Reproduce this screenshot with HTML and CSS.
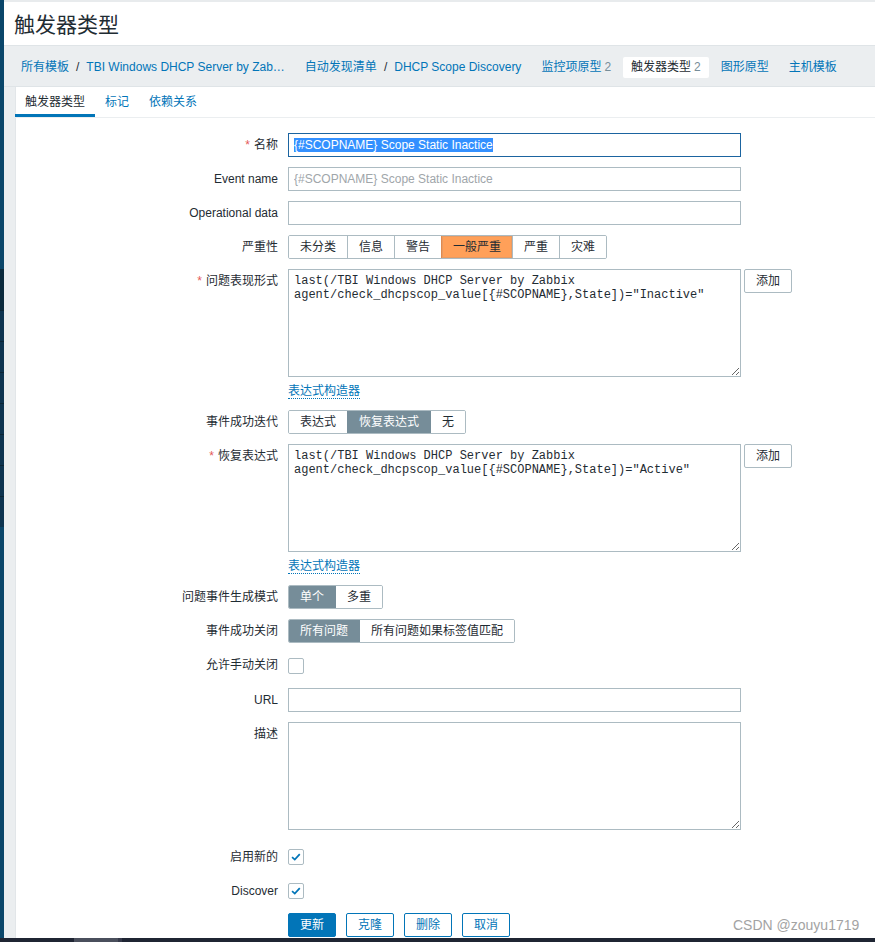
FILE: index.html
```html
<!DOCTYPE html>
<html lang="zh-CN">
<head>
<meta charset="utf-8">
<title>触发器类型</title>
<link rel="stylesheet" href="styles.css">
</head>
<body>
<div class="screen">
  <div class="app">
    <div class="rail">
      <div class="rail-top"></div>
      <div class="rail-dark"></div>
      <div class="rail-item"></div>
      <div class="rail-item"></div>
      <div class="rail-item"></div>
      <div class="rail-item"></div>
      <div class="rail-item"></div>
      <div class="rail-item"></div>
      <div class="rail-item"></div>
      <div class="rail-rest"></div>
    </div>
    <div class="main">
      <header class="page-header">
        <h1 class="page-title">触发器类型</h1>
      </header>
      <nav class="crumbs">
        <div class="crumb"><a class="link">所有模板</a><span class="sep">/</span><a class="link">TBI Windows DHCP Server by Zab…</a></div>
        <div class="crumb"><a class="link">自动发现清单</a><span class="sep">/</span><a class="link">DHCP Scope Discovery</a></div>
        <div class="crumb"><a class="link">监控项原型</a> <span class="count">2</span></div>
        <div class="crumb current"><span>触发器类型</span> <span class="count">2</span></div>
        <div class="crumb"><a class="link">图形原型</a></div>
        <div class="crumb"><a class="link">主机模板</a></div>
      </nav>
      <div class="wrap">
        <div class="panel">
          <div class="tabs">
            <span class="tab active">触发器类型</span>
            <a class="tab">标记</a>
            <a class="tab">依赖关系</a>
          </div>
          <form class="form">
            <div class="row">
              <label class="lbl"><span class="req">*</span>名称</label>
              <div class="fld"><div class="text-input focused"><span class="sel">{#SCOPNAME} Scope Static Inactice</span></div></div>
            </div>
            <div class="row">
              <label class="lbl">Event name</label>
              <div class="fld"><input class="text-input" type="text" placeholder="{#SCOPNAME} Scope Static Inactice"></div>
            </div>
            <div class="row">
              <label class="lbl">Operational data</label>
              <div class="fld"><input class="text-input" type="text"></div>
            </div>
            <div class="row">
              <label class="lbl">严重性</label>
              <div class="fld">
                <div class="seg">
                  <span class="opt">未分类</span>
                  <span class="opt">信息</span>
                  <span class="opt">警告</span>
                  <span class="opt sev-avg">一般严重</span>
                  <span class="opt">严重</span>
                  <span class="opt">灾难</span>
                </div>
              </div>
            </div>
            <div class="row">
              <label class="lbl"><span class="req">*</span>问题表现形式</label>
              <div class="fld">
                <div class="fld-inline">
                  <textarea class="area" spellcheck="false">last(/TBI Windows DHCP Server by Zabbix agent/check_dhcpscop_value[{#SCOPNAME},State])="Inactive"</textarea>
                  <button type="button" class="btn-alt">添加</button>
                </div>
                <div class="under"><a class="dotted">表达式构造器</a></div>
              </div>
            </div>
            <div class="row">
              <label class="lbl">事件成功迭代</label>
              <div class="fld">
                <div class="seg">
                  <span class="opt">表达式</span>
                  <span class="opt on">恢复表达式</span>
                  <span class="opt">无</span>
                </div>
              </div>
            </div>
            <div class="row">
              <label class="lbl"><span class="req">*</span>恢复表达式</label>
              <div class="fld">
                <div class="fld-inline">
                  <textarea class="area" spellcheck="false">last(/TBI Windows DHCP Server by Zabbix agent/check_dhcpscop_value[{#SCOPNAME},State])="Active"</textarea>
                  <button type="button" class="btn-alt">添加</button>
                </div>
                <div class="under"><a class="dotted">表达式构造器</a></div>
              </div>
            </div>
            <div class="row">
              <label class="lbl">问题事件生成模式</label>
              <div class="fld">
                <div class="seg">
                  <span class="opt on">单个</span>
                  <span class="opt">多重</span>
                </div>
              </div>
            </div>
            <div class="row">
              <label class="lbl">事件成功关闭</label>
              <div class="fld">
                <div class="seg">
                  <span class="opt on">所有问题</span>
                  <span class="opt">所有问题如果标签值匹配</span>
                </div>
              </div>
            </div>
            <div class="row row-tall">
              <label class="lbl">允许手动关闭</label>
              <div class="fld fld-check"><span class="check"></span></div>
            </div>
            <div class="row">
              <label class="lbl">URL</label>
              <div class="fld"><input class="text-input" type="text"></div>
            </div>
            <div class="row">
              <label class="lbl">描述</label>
              <div class="fld"><textarea class="area" spellcheck="false"></textarea></div>
            </div>
            <div class="row row-spaced">
              <label class="lbl">启用新的</label>
              <div class="fld fld-check"><span class="check"><svg viewBox="0 0 16 16" width="14" height="14"><path d="M3.5 8.2 L6.6 11 L12.3 4.8" fill="none" stroke="#0275b8" stroke-width="2"/></svg></span></div>
            </div>
            <div class="row">
              <label class="lbl">Discover</label>
              <div class="fld fld-check"><span class="check"><svg viewBox="0 0 16 16" width="14" height="14"><path d="M3.5 8.2 L6.6 11 L12.3 4.8" fill="none" stroke="#0275b8" stroke-width="2"/></svg></span></div>
            </div>
            <div class="row">
              <div class="lbl"></div>
              <div class="fld actions">
                <button type="button" class="btn primary">更新</button>
                <button type="button" class="btn">克隆</button>
                <button type="button" class="btn">删除</button>
                <button type="button" class="btn">取消</button>
              </div>
            </div>
          </form>
        </div>
      </div>
    </div>
  </div>
  <div class="hbar">
    <div class="hbar-gap"></div>
    <div class="hbar-thumb"></div>
    <div class="hbar-tail"></div>
  </div>
  <div class="watermark">CSDN @zouyu1719</div>
</div>
</body>
</html>
```

FILE: styles.css
```css
* { box-sizing: border-box; }

html, body {
  margin: 0;
  padding: 0;
  height: 942px;
  overflow: hidden;
  background: #ffffff;
}

body {
  font-family: "Liberation Sans", "Noto Sans CJK SC", sans-serif;
  font-size: 12px;
  color: #1f2c33;
}

.screen {
  position: relative;
  height: 942px;
  display: flex;
  flex-direction: column;
}

.app {
  flex: 1;
  display: flex;
  overflow: hidden;
  min-height: 0;
}

/* left rail */
.rail {
  width: 4px;
  flex: none;
  display: flex;
  flex-direction: column;
  background: #0a466a;
}
.rail-top { height: 269px; background: #0a466a; }
.rail-dark { height: 41px; background: #0a2a3d; }
.rail-item { height: 31px; background: #0d3450; border-top: 1px solid #0a2536; }
.rail-rest { flex: 1; background: #0a466a; }

.main {
  flex: 1;
  display: flex;
  flex-direction: column;
  min-width: 0;
}

/* header */
.page-header {
  height: 46px;
  border-top: 2px solid #e8ebed;
  border-bottom: 1px solid #dfe4e7;
  background: #ffffff;
  padding-left: 10px;
  padding-top: 2px;
  display: flex;
  align-items: center;
}
.page-title {
  margin: 0;
  font-size: 21px;
  font-weight: normal;
  line-height: 28px;
  color: #1f2c33;
}

/* breadcrumbs */
.crumbs {
  height: 41px;
  background: #ebeef0;
  border-bottom: 1px solid #dfe4e7;
  display: flex;
  align-items: center;
  gap: 4px;
  padding-left: 9px;
  padding-top: 3px;
  white-space: nowrap;
}
.crumb {
  display: flex;
  align-items: center;
  padding: 0 8px;
  height: 21px;
  line-height: 21px;
  border-radius: 2px;
}
.crumb.current {
  background: #ffffff;
  color: #1f2c33;
}
.crumb .count {
  color: #768d99;
  margin-left: 3px;
}
.link {
  color: #0275b8;
  text-decoration: none;
}
.sep {
  margin: 0 7px;
  color: #1f2c33;
}

/* content */
.wrap {
  flex: 1;
  background: #ebeef0;
  padding-left: 11px;
  display: flex;
  min-height: 0;
}
.panel {
  flex: 1;
  background: #ffffff;
  border-left: 1px solid #e2e6e9;
  display: flex;
  flex-direction: column;
}

.tabs {
  height: 31px;
  border-bottom: 1px solid #ebeef0;
  display: flex;
  margin-left: -1px;
}
.tab {
  padding: 0 10px;
  height: 30px;
  line-height: 28px;
  color: #0275b8;
  border-bottom: 3px solid transparent;
  padding-top: 1px;
}
.tab.active {
  color: #1f2c33;
  border-bottom-color: #0275b8;
}

/* form */
.form {
  padding-top: 15px;
  display: flex;
  flex-direction: column;
  gap: 10px;
  margin-left: -1px;
}
.row {
  display: flex;
  gap: 10px;
  align-items: flex-start;
}
.row-spaced { margin-top: 5px; }
.lbl {
  width: 263px;
  flex: none;
  text-align: right;
  line-height: 24px;
  color: #1f2c33;
  white-space: nowrap;
}
.row-tall .lbl { line-height: 25px; }
.row-tall .fld-check { height: 25px; }
.req {
  color: #e45959;
  margin-right: 4px;
}
.fld {
  flex: 1;
  min-width: 0;
}
.fld-inline {
  display: flex;
  gap: 3px;
  align-items: flex-start;
}

.text-input {
  display: block;
  width: 453px;
  height: 24px;
  border: 1px solid #acbbc2;
  border-radius: 0;
  padding: 0 5px;
  font: inherit;
  font-size: 12px;
  line-height: 22px;
  color: #1f2c33;
  background: #ffffff;
  outline: none;
}
.text-input::placeholder {
  color: #a0a6aa;
}
.text-input.focused {
  border-color: #1b64a0;
  white-space: nowrap;
}
.sel {
  background: #3390ff;
  color: #ffffff;
}

.area {
  display: block;
  width: 453px;
  height: 108px;
  border: 1px solid #acbbc2;
  padding: 4px 5px;
  margin: 0;
  font-family: "Liberation Mono", monospace;
  font-size: 12px;
  line-height: 14px;
  color: #1f2c33;
  background: #ffffff;
  outline: none;
  resize: both;
}

.under {
  height: 23px;
  padding-top: 7px;
}
.dotted {
  color: #0275b8;
  line-height: 15px;
  border-bottom: 1px dotted #0275b8;
}

/* segmented */
.seg {
  display: inline-flex;
  border: 1px solid #acbbc2;
  border-radius: 2px;
  overflow: hidden;
  height: 24px;
  white-space: nowrap;
}
.opt {
  padding: 0 11px;
  line-height: 22px;
  border-left: 1px solid #acbbc2;
  color: #1f2c33;
  background: #ffffff;
}
.opt:first-child { border-left: none; }
.opt.on {
  background: #768d99;
  color: #ffffff;
  border-left-color: #768d99;
}
.opt.on + .opt { border-left-color: #768d99; }
.opt.sev-avg {
  background: #ffa059;
  border-left-color: #e08a4e;
  box-shadow: inset 0 0 0 1px #e89a62;
}

/* checkboxes */
.fld-check {
  height: 24px;
  display: flex;
  align-items: center;
}
.check {
  width: 16px;
  height: 16px;
  border: 1px solid #acbbc2;
  border-radius: 2px;
  background: #ffffff;
  display: flex;
  align-items: center;
  justify-content: center;
}
.check svg { display: block; }

/* buttons */
.btn-alt {
  height: 24px;
  padding: 0 11px;
  border: 1px solid #acbbc2;
  border-radius: 2px;
  background: #ffffff;
  color: #1f2c33;
  font: inherit;
  font-size: 12px;
  line-height: 22px;
}
.actions {
  display: flex;
  gap: 10px;
}
.btn {
  height: 24px;
  padding: 0 11px;
  border: 1px solid #0275b8;
  border-radius: 2px;
  background: #ffffff;
  color: #0275b8;
  font: inherit;
  font-size: 12px;
  line-height: 22px;
}
.btn.primary {
  background: #0275b8;
  color: #ffffff;
}

/* window scrollbar strip */
.hbar {
  height: 4px;
  flex: none;
  display: flex;
  background: #1f2533;
}
.hbar-gap { width: 74px; }
.hbar-thumb { width: 44px; background: #4a4f5c; }
.hbar-tail { width: 4px; background: #35394a; }

.watermark {
  position: absolute;
  left: 733px;
  top: 916px;
  font-family: "Liberation Sans", sans-serif;
  font-size: 14px;
  line-height: 18px;
  color: #a3a3a3;
  white-space: nowrap;
}
```
